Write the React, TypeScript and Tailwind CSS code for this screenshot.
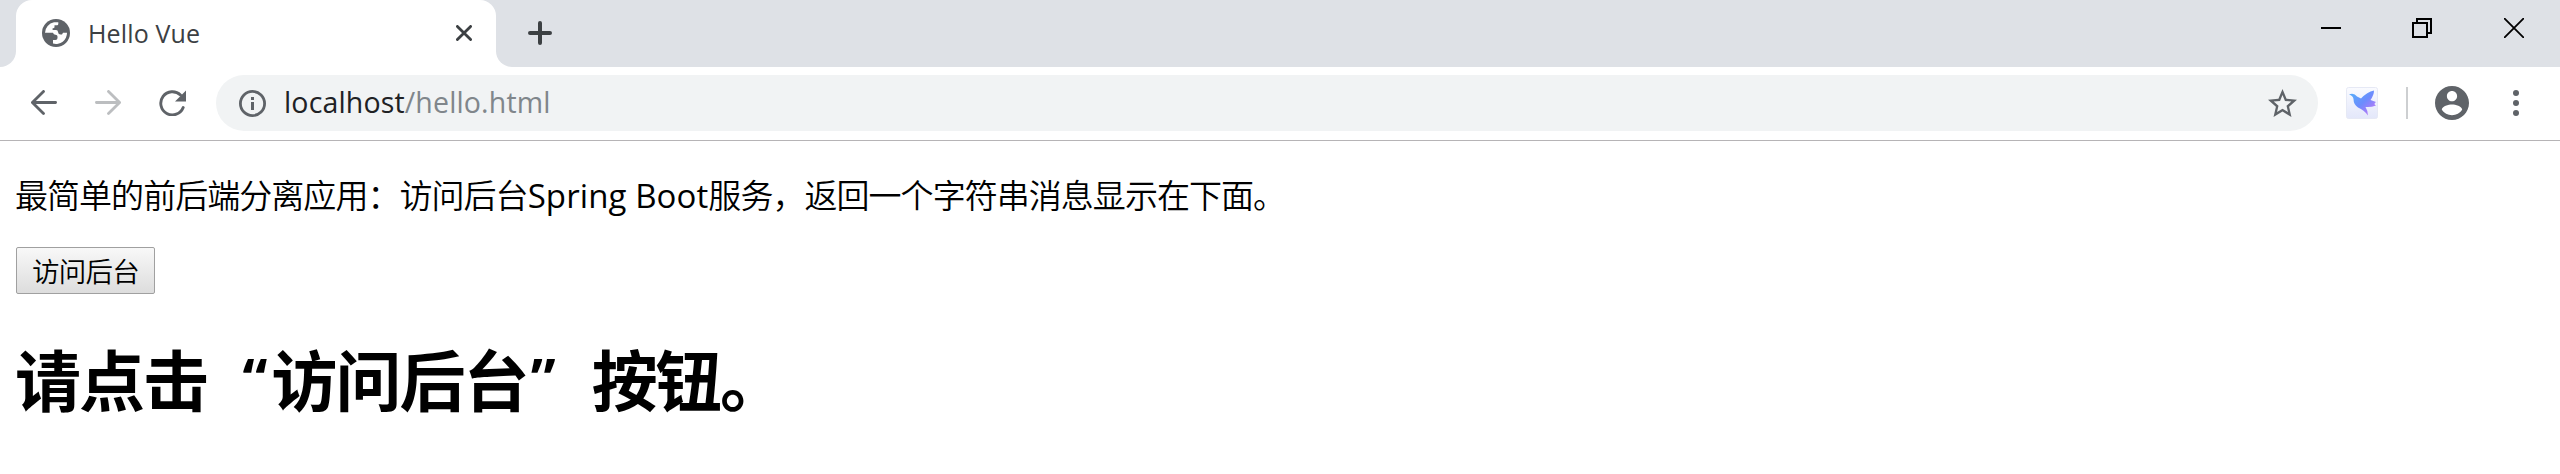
import type { ReactNode } from "react";

function TabStrip() {
  return (
    <header className="flex h-[67px] items-start bg-[#dee1e6]">
      <div className="h-[67px] w-4 bg-white">
        <div className="h-full w-full rounded-br-[16px] bg-[#dee1e6]" />
      </div>
      <div className="h-[67px] w-[480px] bg-[#dee1e6]">
        <div className="flex h-full items-center rounded-t-[16px] bg-white pl-[26px]">
          <svg className="mb-[1px] h-7 w-7 shrink-0" viewBox="0 0 28 28">
            <circle cx="14" cy="14" r="14" fill="#5f6368" />
            <path d="M3 13.8 A11 11 0 0 1 12 3.3 L16.3 3.3 V5 Q16.3 6.3 15 6.3 H12.5 V8 Q12.5 9.3 11 9.3 H10.6 V11 H14 Q16 11 16 13 Q16.3 15.5 18.5 15.5 H20 L21 13.8 H25 A11 11 0 0 1 11 24.6 V21 H13.5 Q15.5 21 15.5 19 V17.5 Q15.5 15.8 13.5 15.8 Q11.5 15.8 11 13.8Z" fill="#fff" />
          </svg>
          <span className="mb-[1px] ml-[18px] font-['Open_Sans',sans-serif] text-[25px] leading-8 tracking-[0.15px] text-[#3c4043]">Hello Vue</span>
          <svg className="mr-[24px] mb-[1px] ml-auto h-4 w-4" viewBox="0 0 16 16" stroke="#3c4043" strokeWidth="2.8" strokeLinecap="round">
            <path d="M1.4 1.4 14.6 14.6M14.6 1.4 1.4 14.6" />
          </svg>
        </div>
      </div>
      <div className="h-[67px] w-4 bg-white">
        <div className="h-full w-full rounded-bl-[16px] bg-[#dee1e6]" />
      </div>
      <svg className="mt-[21px] ml-4 h-6 w-6" viewBox="0 0 24 24" stroke="#3c4043" strokeWidth="4" strokeLinecap="round">
        <path d="M2 12H22M12 2V22" />
      </svg>
      <svg className="mt-[27px] ml-auto h-[2px] w-5" viewBox="0 0 20 2">
        <path d="M0 0H20V2H0Z" />
      </svg>
      <svg className="mt-[18px] ml-[71px] h-5 w-5" viewBox="0 0 20 20" fill="none" stroke="#000" strokeWidth="2">
        <path d="M1 5H15V19H1ZM5 5V1H19V15H15" />
      </svg>
      <svg className="mt-[18px] mr-9 ml-[72px] h-5 w-5" viewBox="0 0 20 20" stroke="#000" strokeWidth="1.8">
        <path d="M0 0 20 20M20 0 0 20" />
      </svg>
    </header>
  );
}

function Toolbar() {
  return (
    <nav className="flex h-[74px] items-start border-b border-[#b6b4b6] bg-white pt-2">
      <svg className="mt-[15px] ml-[31px] h-[26px] w-[26px]" viewBox="0 0 26 26" fill="none" stroke="#5f6368" strokeWidth="2.8" strokeLinecap="round" strokeLinejoin="round">
        <path d="M24.6 12.5H1.6M12.5 1.4 1.4 12.5 12.5 23.6" />
      </svg>
      <svg className="mt-[15px] ml-[38px] h-[26px] w-[26px]" viewBox="0 0 26 26" fill="none" stroke="#bcbec0" strokeWidth="2.8" strokeLinecap="round" strokeLinejoin="round">
        <path d="M1.4 12.5H24.4M13.5 1.4 24.6 12.5 13.5 23.6" />
      </svg>
      <svg className="mt-[15px] ml-[38px] h-[26px] w-[27px]" viewBox="0 0 27 26" fill="none">
        <path d="M21.5 5 A11.6 11.6 0 1 0 24.2 17.5" stroke="#5f6368" strokeWidth="2.9" strokeLinecap="round" />
        <path d="M27 0.5V11.5H16Z" fill="#5f6368" />
      </svg>
      <div className="ml-[30px] flex h-14 w-[2102px] items-center rounded-full bg-[#f1f3f4] pr-[21px] pl-[23px]">
        <svg className="h-[27px] w-[27px]" viewBox="0 0 27 27">
          <circle cx="13.5" cy="13.5" r="12.1" fill="none" stroke="#5f6368" strokeWidth="2.8" />
          <path d="M12 12H15V20H12ZM12 7H15V10H12Z" fill="#5f6368" />
        </svg>
        <span className="mb-[2px] ml-[18px] font-['Open_Sans',sans-serif] text-[28.5px] leading-9 tracking-[0.15px] text-[#202124]">
          localhost<span className="text-[#80868b]">/hello.html</span>
        </span>
        <svg className="mb-[1px] ml-auto h-[28px] w-[29px]" viewBox="2 2 20 19" fill="#5f6368" preserveAspectRatio="none">
          <path d="M22 9.24l-7.19-.62L12 2 9.19 8.63 2 9.24l5.46 4.73L5.82 21 12 17.27 18.18 21l-1.63-7.03L22 9.24zM12 15.4l-3.76 2.27 1-4.28-3.32-2.88 4.38-.38L12 6.1l1.71 4.04 4.38.38-3.32 2.88 1 4.28L12 15.4z" />
        </svg>
      </div>
      <svg className="mt-3 ml-7 h-8 w-8" viewBox="0 0 32 32">
        <defs>
          <linearGradient id="tile" x1="0" y1="0" x2="0" y2="1">
            <stop offset="0" stopColor="#fafbff" />
            <stop offset="1" stopColor="#e3e7fa" />
          </linearGradient>
          <linearGradient id="bird" x1="0.1" y1="0.2" x2="0.8" y2="0.9">
            <stop offset="0" stopColor="#5aa8fb" />
            <stop offset="0.5" stopColor="#6c8cfd" />
            <stop offset="1" stopColor="#b57bf8" />
          </linearGradient>
        </defs>
        <rect x="0.5" y="0.5" width="31" height="31" rx="2" fill="url(#tile)" stroke="#e6e9f5" />
        <path d="M3 7.5 Q8 5.5 11 9.5 L15 11.5 Q21 5 28 3.5 Q28 8 24.5 13 L30 15 Q27 17 30 18.5 Q25 20.5 19.5 20 Q22 24 22 28.5 Q18 23 12 20.5 Q7.5 17.5 7.5 12 Q7 8.5 3 7.5Z" fill="url(#bird)" />
      </svg>
      <div className="mt-3 ml-7 h-8 w-[2px] bg-[#cdcfd1]" />
      <svg className="mt-[11px] ml-[27px] h-[34px] w-[34px]" viewBox="2 2 20 20" fill="#5f6368">
        <path d="M12 2C6.48 2 2 6.48 2 12s4.48 10 10 10 10-4.48 10-10S17.52 2 12 2zm0 3c1.66 0 3 1.34 3 3s-1.34 3-3 3-3-1.34-3-3 1.34-3 3-3zm0 14.2c-2.5 0-4.71-1.28-6-3.22.03-1.99 4-3.08 6-3.08 1.99 0 5.97 1.09 6 3.08-1.29 1.94-3.5 3.22-6 3.22z" />
      </svg>
      <svg className="mt-[15px] ml-11 h-[26px] w-[6px]" viewBox="0 0 6 26" fill="#5f6368">
        <circle cx="3" cy="3" r="3" />
        <circle cx="3" cy="13" r="3" />
        <circle cx="3" cy="23" r="3" />
      </svg>
    </nav>
  );
}

function Latin({ children }: { children: ReactNode }) {
  return <span className="font-['Open_Sans',sans-serif] text-[33px] leading-none font-normal tracking-[0.1px]">{children}</span>;
}

export default function App() {
  return (
    <div className="h-[474px] overflow-hidden bg-white">
      <TabStrip />
      <Toolbar />
      <main lang="zh-CN" className="flex flex-col items-start pl-4 font-['Noto_Sans_CJK_SC',sans-serif] text-black">
        <p className="mt-[32px] -ml-[1px] h-[42px] text-[33px] leading-[42px] font-[350] tracking-[-0.96px] whitespace-nowrap">
          最简单的前后端分离应用：访问后台<Latin>Spring Boot</Latin>服务，返回一个字符串消息显示在下面。
        </p>
        <button className="mt-[32px] flex h-[47px] w-[139px] items-center justify-center rounded-[2px] border border-[#a0a0a0] bg-linear-to-b from-[#f8f8f8] to-[#dddddd] pb-[2px] text-[27.5px] leading-9 font-[350] tracking-[-0.8px]">
          访问后台
        </button>
        <h1 className="mt-[41px] -ml-[1px] flex h-[84px] text-[66px] leading-[84px] font-bold tracking-[-1.9px] whitespace-nowrap">
          <span>请点击</span>
          <span className="w-16 pr-[4px] text-right font-['Open_Sans',sans-serif] text-[56px] font-bold tracking-normal">“</span>
          <span>访问后台</span>
          <span className="w-16 pl-[3px] font-['Open_Sans',sans-serif] text-[56px] font-bold tracking-normal">”</span>
          <span>按钮。</span>
        </h1>
      </main>
    </div>
  );
}
